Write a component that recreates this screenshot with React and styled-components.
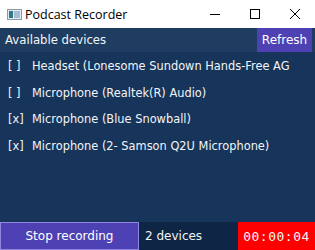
import React from "react";
import styled, { createGlobalStyle } from "styled-components";

const Global = createGlobalStyle`
  html, body { margin: 0; padding: 0; }
  body { width: 315px; height: 250px; overflow: hidden; background: #fff; }
`;

const Window = styled.div`
  width: 315px;
  height: 250px;
  display: flex;
  flex-direction: column;
  background: #17355a;
  font-family: "DejaVu Sans", sans-serif;
  color: #f2f4f8;
`;

const TitleBar = styled.div`
  height: 28px;
  flex: none;
  background: #ffffff;
  display: flex;
  align-items: center;
  color: #000;
  font-family: "Open Sans", "Noto Sans", sans-serif;
  font-size: 12.5px;
`;

const AppIcon = styled.svg`
  margin-left: 7px;
  margin-right: 3px;
  flex: none;
`;

const Title = styled.div`
  flex: 1;
`;

const Ctrl = styled.div`
  width: 40px;
  height: 28px;
  display: flex;
  align-items: center;
  justify-content: center;
`;

const Header = styled.div`
  height: 24px;
  flex: none;
  display: flex;
  align-items: center;
  background: #1f3d60;
`;

const HeaderText = styled.div`
  flex: 1;
  padding-left: 5px;
  font-size: 11.7px;
`;

const Button = styled.button`
  border: ${(p) => (p.$bordered ? "1px solid #8f86e0" : "none")};
  background: #4d41b4;
  color: #fff;
  font-family: "DejaVu Sans", sans-serif;
  font-size: 12px;
  padding: 0;
  margin: 0 ${(p) => p.$mr || 0}px 0 0;
  height: 100%;
  width: ${(p) => p.$w}px;
  flex: none;
  display: flex;
  align-items: center;
  justify-content: center;
`;

const List = styled.div`
  flex: 1;
  display: flex;
  flex-direction: column;
  padding-top: 1px;
`;

const Row = styled.div`
  height: 26.6px;
  display: flex;
  align-items: center;
  padding-left: 8px;
  font-size: 11.4px;
  white-space: nowrap;
  overflow: hidden;
`;

const Mark = styled.span`
  flex: none;
  width: 24px;
  white-space: pre;
`;

const Footer = styled.div`
  height: 28px;
  flex: none;
  display: flex;
  align-items: stretch;
  background: #0e2545;
`;

const Count = styled.div`
  flex: 1;
  display: flex;
  align-items: center;
  padding-left: 6px;
  font-size: 12px;
`;

const Timer = styled.div`
  width: 77px;
  background: #ff0000;
  display: flex;
  align-items: center;
  justify-content: center;
  font-family: "DejaVu Sans Mono", monospace;
  font-size: 13px;
  letter-spacing: 0.5px;
`;

const devices = [
  { on: false, name: "Headset (Lonesome Sundown Hands-Free AG" },
  { on: false, name: "Microphone (Realtek(R) Audio)" },
  { on: true, name: "Microphone (Blue Snowball)" },
  { on: true, name: "Microphone (2- Samson Q2U Microphone)" },
];

export default function App() {
  return (
    <>
      <Global />
      <Window>
        <TitleBar>
          <AppIcon width="15" height="11" viewBox="0 0 15 11">
            <rect x="0.5" y="0.5" width="14" height="10" fill="#e3e9ef" stroke="#8a9aab" />
            <rect x="2" y="2" width="4" height="7" fill="#2e7a8a" />
            <rect x="7" y="2" width="6" height="7" fill="#a8bccf" />
          </AppIcon>
          <Title>Podcast Recorder</Title>
          <Ctrl>
            <svg width="10" height="10" viewBox="0 0 10 10"><path d="M0 5.5h10" stroke="#000" strokeWidth="1" /></svg>
          </Ctrl>
          <Ctrl>
            <svg width="10" height="10" viewBox="0 0 10 10"><rect x="0.5" y="0.5" width="9" height="9" fill="none" stroke="#000" strokeWidth="1" /></svg>
          </Ctrl>
          <Ctrl>
            <svg width="10" height="10" viewBox="0 0 10 10"><path d="M0 0L10 10M10 0L0 10" stroke="#000" strokeWidth="1" /></svg>
          </Ctrl>
        </TitleBar>
        <Header>
          <HeaderText>Available devices</HeaderText>
          <Button $w={55} $mr={3}>Refresh</Button>
        </Header>
        <List>
          {devices.map((d, i) => (
            <Row key={i}>
              <Mark>{d.on ? "[x]" : "[ ]"}</Mark>
              {d.name}
            </Row>
          ))}
        </List>
        <Footer>
          <Button $w={139} $bordered>Stop recording</Button>
          <Count>2 devices</Count>
          <Timer>00:00:04</Timer>
        </Footer>
      </Window>
    </>
  );
}
